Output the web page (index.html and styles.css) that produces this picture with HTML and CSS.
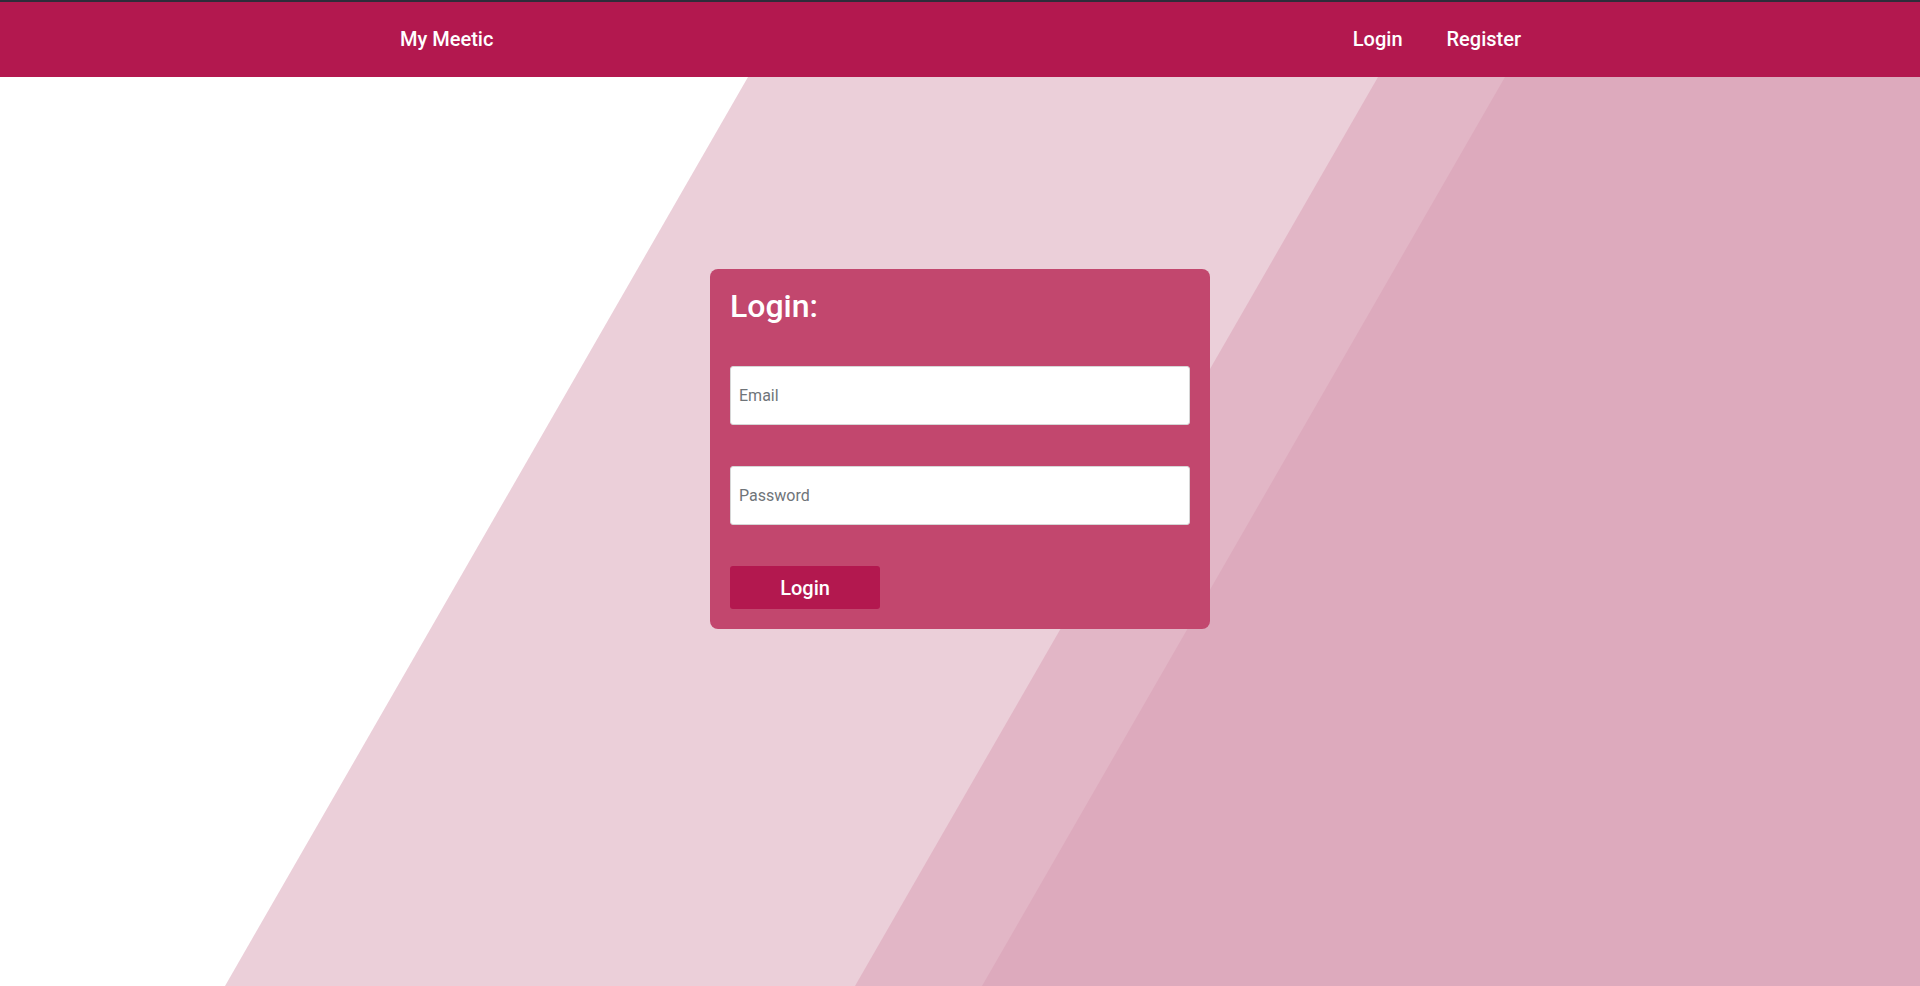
FILE: index.html
```html
<!DOCTYPE html>
<html lang="en">
<head>
<meta charset="utf-8">
<title>My Meetic - Login</title>
<link rel="stylesheet" href="styles.css">
</head>
<body>
<nav class="navbar">
  <div class="nav-inner">
    <a class="brand" href="#">My Meetic</a>
    <div class="nav-links">
      <a class="nav-link" href="#">Login</a>
      <a class="nav-link" href="#">Register</a>
    </div>
  </div>
</nav>
<main class="main">
  <svg class="bg" viewBox="0 0 1920 909" preserveAspectRatio="none" aria-hidden="true">
    <polygon points="748,0 1920,0 1920,909 225,909" fill="#ebcfd9"/>
    <polygon points="1378,0 1920,0 1920,909 855,909" fill="#e2b6c6"/>
    <polygon points="1505,0 1920,0 1920,909 982,909" fill="#ddaabd"/>
  </svg>
  <form class="card">
    <h2 class="card-title">Login:</h2>
    <input class="field" type="email" placeholder="Email">
    <input class="field" type="password" placeholder="Password">
    <button class="btn" type="button">Login</button>
  </form>
</main>
</body>
</html>
```

FILE: styles.css
```css
html, body {
  margin: 0;
  padding: 0;
}

body {
  font-family: Roboto, "Liberation Sans", Arial, sans-serif;
  background: #ffffff;
  overflow: hidden;
}

.navbar {
  border-top: 2px solid #2e2c3a;
  background: #b3184f;
  height: 75px;
  display: flex;
  align-items: center;
}

.nav-inner {
  width: 1140px;
  margin: 0 auto;
  padding: 0 9px 2px 10px;
  box-sizing: border-box;
  display: flex;
  justify-content: space-between;
  align-items: center;
}

.brand,
.nav-link {
  color: #ffffff;
  text-decoration: none;
  font-size: 20px;
  font-weight: 500;
  line-height: 24px;
}

.nav-links {
  display: flex;
  gap: 44px;
}

.main {
  position: relative;
  height: calc(100vh - 77px);
  overflow: hidden;
}

.bg {
  position: absolute;
  top: 0;
  left: 0;
  width: 100%;
  height: 100%;
  display: block;
}

.card {
  position: relative;
  z-index: 1;
  width: 500px;
  box-sizing: border-box;
  margin: 192px auto 0;
  padding: 18px 20px 20px;
  background: #c2476e;
  border-radius: 8px;
  display: flex;
  flex-direction: column;
  align-items: flex-start;
}

.card-title {
  margin: 0 0 41px;
  color: #ffffff;
  font-size: 32px;
  font-weight: 500;
  line-height: 1.2;
}

.field {
  width: 100%;
  height: 59px;
  box-sizing: border-box;
  margin: 0 0 41px;
  padding: 0 8px;
  border: 1px solid #d6d6d6;
  border-radius: 3px;
  background: #ffffff;
  font-family: Roboto, "Liberation Sans", Arial, sans-serif;
  font-size: 16px;
  color: #333333;
  outline: none;
}

.field::placeholder {
  color: #6f7479;
}

.btn {
  width: 150px;
  height: 43px;
  border: none;
  border-radius: 3px;
  background: #b3184f;
  color: #ffffff;
  font-family: Roboto, "Liberation Sans", Arial, sans-serif;
  font-size: 20px;
  font-weight: 500;
  cursor: pointer;
  padding: 0;
}
```
